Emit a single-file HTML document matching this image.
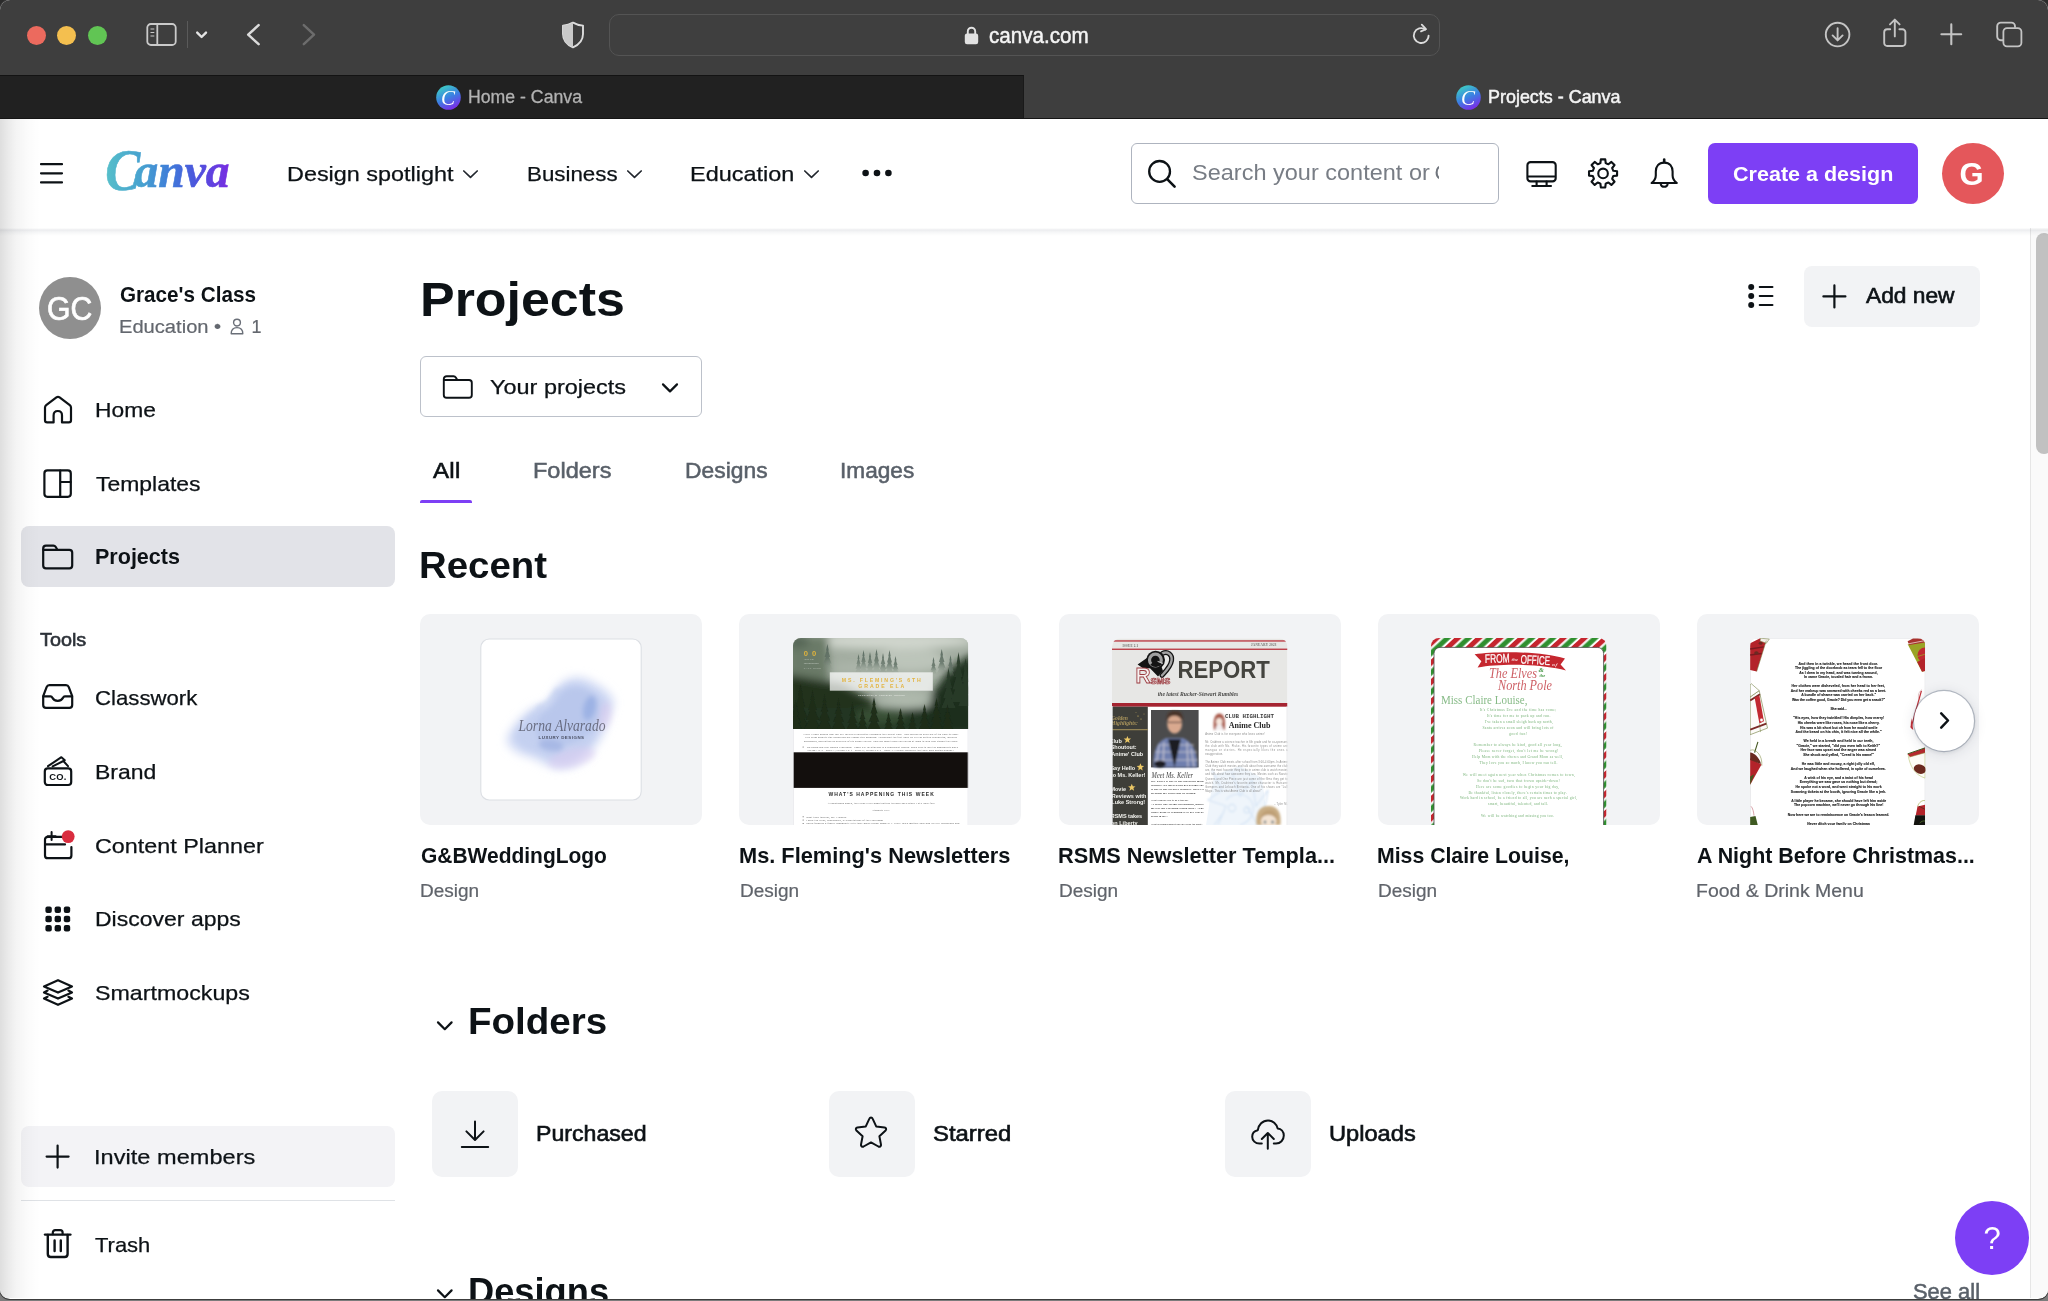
<!DOCTYPE html>
<html lang="en">
<head>
<meta charset="utf-8">
<title>Projects - Canva</title>
<style>
*{box-sizing:border-box;margin:0;padding:0}
html,body{width:2048px;height:1301px;overflow:hidden;background:linear-gradient(#2b2b2b 0,#2b2b2b 50%,#7c7c7c 50%,#7c7c7c 100%)}
body{font-family:"Liberation Sans",sans-serif;color:#0d1216;position:relative}
.abs{position:absolute}
.t{position:absolute;white-space:nowrap;line-height:1;z-index:7;transform-origin:0 50%}
svg{position:absolute;overflow:visible}
#win{will-change:transform;position:absolute;left:0;top:0;width:2048px;height:1299px;overflow:hidden;border-radius:10px 10px 10px 10px;background:#fff;box-shadow:0 0 0 1px #3c3c3c}
#toolbar{position:absolute;left:0;top:0;width:2048px;height:75px;background:#3e3e3e}
#tabbar{position:absolute;left:0;top:75px;width:2048px;height:44px;background:#3e3e3e;border-bottom:1px solid #151515}
#tab1{position:absolute;left:0;top:0;width:1024px;height:43px;background:#212121;border-top:1.5px solid #131313;border-right:1px solid #191919}
#urlbar{position:absolute;left:609px;top:14px;width:831px;height:42px;border-radius:10px;background:#3f3f3f;border:1px solid #545454}
.light{position:absolute;top:25.5px;width:19px;height:19px;border-radius:50%}
#page{position:absolute;left:0;top:119px;width:2048px;height:1179px;background:#fff}
#hdr{position:absolute;left:0;top:119px;width:2048px;height:109px;background:#fff;z-index:5}
#hdrsh{position:absolute;left:0;top:227.6px;width:2048px;height:8.4px;z-index:5;background:linear-gradient(180deg,rgba(50,60,85,0) 0,rgba(50,60,85,.095) 26%,rgba(50,60,85,.05) 48%,rgba(50,60,85,.018) 78%,rgba(50,60,85,0) 100%)}
#leftshade{position:absolute;left:0;top:119px;width:40px;height:1179px;background:linear-gradient(90deg,rgba(0,0,0,.13),rgba(0,0,0,.085) 18%,rgba(0,0,0,.045) 40%,rgba(0,0,0,.015) 70%,rgba(0,0,0,0));z-index:9;pointer-events:none}
#sbtrack{position:absolute;left:2030px;top:228px;width:18px;height:1070px;background:#fafafa;border-left:1px solid #e6e6e6;z-index:4}
#sbthumb{position:absolute;left:5px;top:5px;width:16px;height:221px;border-radius:8px;background:#c1c1c1}
.card{position:absolute;top:614px;width:282px;height:211px;border-radius:10px;background:#f2f3f5;overflow:hidden}
.thumb{position:absolute;overflow:hidden}
.tile{position:absolute;top:1091px;width:86px;height:86px;border-radius:10px;background:#f2f3f5}
.ic{fill:none;stroke:#0d1216;stroke-width:1.5;stroke-linecap:round;stroke-linejoin:round}
</style>
</head>
<body>
<div id="win">
<!-- ===== Safari chrome ===== -->
<div id="toolbar">
  <div class="light" style="left:26.5px;background:#ec6a5e"></div>
  <div class="light" style="left:57px;background:#f4bf4f"></div>
  <div class="light" style="left:87.5px;background:#61c554"></div>
  <!-- sidebar toggle -->
  <svg style="left:146px;top:22px" width="32" height="25" viewBox="0 0 32 25"><rect x="1.3" y="2" width="28.4" height="21" rx="3.6" fill="none" stroke="#cacaca" stroke-width="1.8"/><line x1="11.3" y1="2" x2="11.3" y2="23" stroke="#cacaca" stroke-width="1.8"/><g stroke="#cacaca" stroke-width="1.2"><line x1="4.5" y1="7" x2="8.3" y2="7"/><line x1="4.5" y1="10.5" x2="8.3" y2="10.5"/><line x1="4.5" y1="14" x2="8.3" y2="14"/></g></svg>
  <div class="abs" style="left:186.5px;top:21px;width:1px;height:27px;background:#5a5a5a"></div>
  <svg style="left:195px;top:29px" width="13" height="11" viewBox="0 0 13 11"><path d="M2.2 3.6 L6.6 8 L11 3.6" fill="none" stroke="#e4e4e4" stroke-width="2.4" stroke-linecap="round" stroke-linejoin="round"/></svg>
  <!-- back / forward -->
  <svg style="left:245px;top:22px" width="18" height="26" viewBox="0 0 18 26"><path d="M13.6 3.2 L3.2 12.7 L13.6 22.2" fill="none" stroke="#dadada" stroke-width="2.5" stroke-linecap="round" stroke-linejoin="round"/></svg>
  <svg style="left:300px;top:22px" width="18" height="26" viewBox="0 0 18 26"><path d="M3.8 3.2 L14 12.7 L3.8 22.2" fill="none" stroke="#6c6c6c" stroke-width="2.5" stroke-linecap="round" stroke-linejoin="round"/></svg>
  <!-- shield -->
  <svg style="left:561px;top:21px" width="24" height="28" viewBox="0 0 24 28"><path d="M12 1.6 C8.5 3.6 5 4.4 2 4.6 V13 C2 19.5 6.2 23.8 12 26.3 C17.8 23.8 22 19.5 22 13 V4.6 C19 4.4 15.5 3.6 12 1.6 Z" fill="none" stroke="#dcdcdc" stroke-width="1.9" stroke-linejoin="round"/><path d="M12 1.6 C8.5 3.6 5 4.4 2 4.6 V13 C2 19.5 6.2 23.8 12 26.3 Z" fill="#c9c9c9"/></svg>
  <div id="urlbar"></div>
  <!-- lock -->
  <svg style="left:964px;top:26px" width="15" height="19" viewBox="0 0 15 19"><rect x="0.8" y="7.6" width="13.4" height="10.6" rx="2.2" fill="#e2e2e2"/><path d="M3.8 8 V5.4 a3.7 3.7 0 0 1 7.4 0 V8" fill="none" stroke="#e2e2e2" stroke-width="1.9"/></svg>
  <!-- reload -->
  <svg style="left:1411px;top:23px" width="21" height="23" viewBox="0 0 21 23"><path d="M17.6 12.6 a7.4 7.4 0 1 1 -3.2 -6.1" fill="none" stroke="#dcdcdc" stroke-width="1.8" stroke-linecap="round"/><path d="M10.8 1.6 L15 6.2 L10 8.3" fill="none" stroke="#dcdcdc" stroke-width="1.8" stroke-linecap="round" stroke-linejoin="round"/></svg>
  <!-- downloads -->
  <svg style="left:1824px;top:21px" width="28" height="28" viewBox="0 0 28 28"><circle cx="13.6" cy="13.6" r="11.8" fill="none" stroke="#c4c4c4" stroke-width="1.9"/><path d="M13.6 7.2 V19 M8.6 14.4 L13.6 19.4 L18.6 14.4" fill="none" stroke="#c4c4c4" stroke-width="1.9" stroke-linecap="round" stroke-linejoin="round"/></svg>
  <!-- share -->
  <svg style="left:1882px;top:18px" width="26" height="30" viewBox="0 0 26 30"><path d="M8.2 11.2 H5.2 a3 3 0 0 0 -3 3 V25 a3 3 0 0 0 3 3 H20.4 a3 3 0 0 0 3 -3 V14.2 a3 3 0 0 0 -3 -3 H17.4" fill="none" stroke="#c4c4c4" stroke-width="1.9" stroke-linecap="round"/><path d="M12.8 18.4 V2 M8 6.4 L12.8 1.6 L17.6 6.4" fill="none" stroke="#c4c4c4" stroke-width="1.9" stroke-linecap="round" stroke-linejoin="round"/></svg>
  <!-- plus -->
  <svg style="left:1940px;top:23px" width="23" height="23" viewBox="0 0 23 23"><path d="M11.3 1.4 V21.2 M1.4 11.3 H21.2" fill="none" stroke="#c4c4c4" stroke-width="2.1" stroke-linecap="round"/></svg>
  <!-- tabs -->
  <svg style="left:1994px;top:20px" width="31" height="29" viewBox="0 0 31 29"><rect x="9.4" y="8.2" width="18" height="18.2" rx="3.6" fill="none" stroke="#c4c4c4" stroke-width="1.8"/><path d="M9 20.2 H6.8 a3.6 3.6 0 0 1 -3.6 -3.6 V6.2 a3.6 3.6 0 0 1 3.6 -3.6 H17.4 a3.6 3.6 0 0 1 3.6 3.6 V7.8" fill="none" stroke="#c4c4c4" stroke-width="1.9"/></svg>
</div>
<div id="tabbar"><div id="tab1"></div></div>
<!-- tab favicons -->
<svg style="left:436px;top:85px" width="25" height="25" viewBox="0 0 25 25"><defs><linearGradient id="fav" x1="0.25" y1="0.05" x2="0.7" y2="0.97"><stop offset="0" stop-color="#3ecbc6"/><stop offset=".5" stop-color="#3b7fe2"/><stop offset="1" stop-color="#7d2ae8"/></linearGradient></defs><circle cx="12.5" cy="12.5" r="12.3" fill="url(#fav)"/><text x="12.1" y="19.6" text-anchor="middle" font-family="Liberation Serif,serif" font-style="italic" font-size="21" fill="#fff">C</text></svg>
<svg style="left:1456px;top:85px" width="25" height="25" viewBox="0 0 25 25"><circle cx="12.5" cy="12.5" r="12.3" fill="url(#fav)"/><text x="12.1" y="19.6" text-anchor="middle" font-family="Liberation Serif,serif" font-style="italic" font-size="21" fill="#fff">C</text></svg>
<!-- ===== Canva page ===== -->
<div id="page"></div>
<div id="sbtrack"><div id="sbthumb"></div></div>
<div id="hdr"></div><div id="hdrsh"></div>
<div id="leftshade"></div>
<div class="abs" style="left:0;top:119px;width:2048px;height:110px;z-index:6">
  <!-- hamburger -->
  <svg style="left:40px;top:43px" width="23" height="23" viewBox="0 0 23 23"><path d="M1 2.2 H22 M1 11.3 H22 M1 20.4 H22" stroke="#0d1216" stroke-width="2.2" stroke-linecap="round"/></svg>
  <!-- Canva wordmark -->
  <svg style="left:100px;top:24px" width="140" height="60" viewBox="100 143 140 60"><defs><linearGradient id="cg" gradientUnits="userSpaceOnUse" x1="106" y1="0" x2="230" y2="0"><stop offset="0" stop-color="#56bfca"/><stop offset=".3" stop-color="#46a0d0"/><stop offset=".52" stop-color="#3f7bd9"/><stop offset=".74" stop-color="#4d52dd"/><stop offset="1" stop-color="#7a2be2"/></linearGradient></defs><g font-family="Liberation Serif,serif" font-style="italic" font-weight="bold" fill="url(#cg)" stroke="url(#cg)" stroke-width=".6"><text x="105.2" y="189.6" font-size="60" textLength="35" lengthAdjust="spacingAndGlyphs">C</text><text x="134.6" y="187.2" font-size="48" textLength="95" lengthAdjust="spacingAndGlyphs">anva</text></g></svg>
  <!-- nav chevrons -->
  <svg style="left:462px;top:50.4px" width="17" height="11" viewBox="0 0 17 11"><path d="M1.8 2 L8.5 8.4 L15.2 2" fill="none" stroke="#22272e" stroke-width="1.7" stroke-linecap="round" stroke-linejoin="round"/></svg>
  <svg style="left:626px;top:50.4px" width="17" height="11" viewBox="0 0 17 11"><path d="M1.8 2 L8.5 8.4 L15.2 2" fill="none" stroke="#22272e" stroke-width="1.7" stroke-linecap="round" stroke-linejoin="round"/></svg>
  <svg style="left:803px;top:50.4px" width="17" height="11" viewBox="0 0 17 11"><path d="M1.8 2 L8.5 8.4 L15.2 2" fill="none" stroke="#22272e" stroke-width="1.7" stroke-linecap="round" stroke-linejoin="round"/></svg>
  <!-- more dots -->
  <svg style="left:862px;top:50px" width="30" height="8" viewBox="0 0 30 8"><circle cx="3.6" cy="4" r="3.3" fill="#0d1216"/><circle cx="15" cy="4" r="3.3" fill="#0d1216"/><circle cx="26.4" cy="4" r="3.3" fill="#0d1216"/></svg>
  <!-- search box -->
  <div class="abs" style="left:1131px;top:24px;width:368px;height:61px;border:1.5px solid #aeb4bf;border-radius:6px;background:#fff;overflow:hidden">
    <svg style="left:15px;top:15px" width="30" height="30" viewBox="0 0 30 30"><circle cx="12.6" cy="12.4" r="10.4" fill="none" stroke="#0d1216" stroke-width="2.3"/><path d="M20.2 20.2 L27.6 27.6" stroke="#0d1216" stroke-width="2.6" stroke-linecap="round"/></svg>
    <div class="t" style="left:302.5px;top:18.6px;font-size:21.5px;color:#70757d;width:4px;overflow:hidden">Canva's</div>
  </div>
  <!-- monitor -->
  <svg style="left:1523px;top:38px" width="38" height="34" viewBox="1523 157 38 34"><rect x="1527.4" y="162.1" width="28.3" height="19.3" rx="3.2" fill="none" stroke="#0d1216" stroke-width="2.1"/><path d="M1527.6 176.6 H1555.6" stroke="#0d1216" stroke-width="2"/><path d="M1536.6 181.6 V185.6 M1546.6 181.6 V185.6 M1532.3 186 H1551" stroke="#0d1216" stroke-width="2.1" stroke-linecap="round"/></svg>
  <!-- gear -->
  <svg style="left:1583px;top:34px" width="40" height="40" viewBox="1583 153 40 40"><path d="M1600.40 163.14 L1600.83 159.37 L1605.27 159.37 L1605.70 163.14 L1607.05 163.75 L1608.43 164.27 L1611.40 161.91 L1614.54 165.05 L1612.18 168.02 L1612.70 169.40 L1613.31 170.75 L1617.08 171.18 L1617.08 175.62 L1613.31 176.05 L1612.70 177.40 L1612.18 178.78 L1614.54 181.75 L1611.40 184.89 L1608.43 182.53 L1607.05 183.05 L1605.70 183.66 L1605.27 187.43 L1600.83 187.43 L1600.40 183.66 L1599.05 183.05 L1597.67 182.53 L1594.70 184.89 L1591.56 181.75 L1593.92 178.78 L1593.40 177.40 L1592.79 176.05 L1589.02 175.62 L1589.02 171.18 L1592.79 170.75 L1593.40 169.40 L1593.92 168.02 L1591.56 165.05 L1594.70 161.91 L1597.67 164.27 L1599.05 163.75 Z" fill="none" stroke="#0d1216" stroke-width="2.1" stroke-linejoin="round"/><circle cx="1603.05" cy="173.4" r="4.8" fill="none" stroke="#0d1216" stroke-width="2.1"/></svg>
  <!-- bell -->
  <svg style="left:1646px;top:34px" width="38" height="40" viewBox="1646 153 38 40"><path d="M1664.2 162.6 C1658.6 162.6 1655.8 166.4 1655.8 171.6 V175.4 C1655.8 178.6 1654 181 1651.6 183 H1676.8 C1674.4 181 1672.6 178.6 1672.6 175.4 V171.6 C1672.6 166.4 1669.8 162.6 1664.2 162.6 Z" fill="none" stroke="#0d1216" stroke-width="2.1" stroke-linejoin="round"/><path d="M1664.2 162 V159.6" stroke="#0d1216" stroke-width="2.6" stroke-linecap="round"/><path d="M1660.6 184 a3.7 3.7 0 0 0 7.2 0" fill="none" stroke="#0d1216" stroke-width="2"/></svg>
  <!-- create button -->
  <div class="abs" style="left:1708px;top:24px;width:210px;height:61px;border-radius:7px;background:#7d3ff5"></div>
  <!-- avatar -->
  <div class="abs" style="left:1942px;top:24px;width:62px;height:61px;border-radius:50%;background:#e4575b"></div>
</div>
<!-- ===== sidebar ===== -->
<div class="abs" style="left:39px;top:277px;width:62px;height:62px;border-radius:50%;background:#8f8f8f"></div>
<!-- member icon -->
<svg style="left:230px;top:318px" width="14" height="17" viewBox="0 0 14 17"><circle cx="7" cy="4.6" r="3.4" fill="none" stroke="#6a6f78" stroke-width="1.4"/><path d="M1.2 15.8 C1.2 11.4 3.4 9.6 7 9.6 C10.6 9.6 12.8 11.4 12.8 15.8 Z" fill="none" stroke="#6a6f78" stroke-width="1.4" stroke-linejoin="round"/></svg>
<!-- active row -->
<div class="abs" style="left:21px;top:526px;width:374px;height:61px;border-radius:8px;background:#e2e3e8"></div>
<!-- invite row -->
<div class="abs" style="left:21px;top:1126px;width:374px;height:61px;border-radius:8px;background:#f3f3f6"></div>
<div class="abs" style="left:21px;top:1200px;width:374px;height:1.2px;background:#dfe2e6"></div>
<!-- home -->
<svg style="left:42px;top:394px" width="32" height="32" viewBox="0 0 32 32"><path d="M3 13.6 C3 12.6 3.4 11.8 4.2 11.2 L14.4 3.4 C15.4 2.7 16.6 2.7 17.6 3.4 L27.8 11.2 C28.6 11.8 29 12.6 29 13.6 V26.2 C29 27.5 28 28.4 26.8 28.4 H20 V21.4 C20 18.6 18.2 17 15.8 17 C13.4 17 11.6 18.6 11.6 21.4 V28.4 H5.2 C4 28.4 3 27.5 3 26.2 Z" class="ic" style="stroke-width:2.2"/></svg>
<!-- templates -->
<svg style="left:42px;top:468px" width="32" height="32" viewBox="0 0 32 32"><rect x="2.4" y="2.4" width="26.4" height="26.4" rx="3" class="ic" style="stroke-width:2.2"/><path d="M18.2 2.6 V28.6 M18.4 14 H28.6" class="ic" style="stroke-width:2.2"/></svg>
<!-- projects folder -->
<svg style="left:41px;top:543px" width="34" height="28" viewBox="0 0 34 28"><path d="M2.2 6 V22.6 C2.2 24.2 3.4 25.4 5 25.4 H28.4 C30 25.4 31.2 24.2 31.2 22.6 V9.6 C31.2 8 30 6.8 28.4 6.8 H16.4 L14.6 3.8 C14.1 3 13.3 2.6 12.4 2.6 H5 C3.4 2.6 2.2 3.8 2.2 5.4 Z" class="ic" style="stroke-width:2.2"/><path d="M2.4 6.8 H16" class="ic" style="stroke-width:2.2"/></svg>
<!-- classwork (inbox) -->
<svg style="left:41px;top:683px" width="34" height="27" viewBox="0 0 34 27"><path d="M2.2 13.2 L5.6 4.2 C6.1 2.9 7.1 2.2 8.4 2.2 H25 C26.3 2.2 27.3 2.9 27.8 4.2 L31.2 13.2 V22 C31.2 23.6 30 24.8 28.4 24.8 H5 C3.4 24.8 2.2 23.6 2.2 22 Z" class="ic" style="stroke-width:2.2"/><path d="M2.4 13.4 H9.6 C10.6 13.4 11 14 11.4 14.8 C12.2 16.6 14 17.8 16.7 17.8 C19.4 17.8 21.2 16.6 22 14.8 C22.4 14 22.8 13.4 23.8 13.4 H31" class="ic" style="stroke-width:2.2"/></svg>
<!-- brand -->
<svg style="left:43px;top:755px" width="30" height="32" viewBox="0 0 30 32"><rect x="1.8" y="13.4" width="26.4" height="16.6" rx="3" class="ic" style="stroke-width:2.2"/><path d="M5 11.2 L18.4 2.2 L21.8 5.2 M9.6 11.4 L20.4 6 L25 11.2" class="ic" style="stroke-width:2"/><text x="15" y="25.2" text-anchor="middle" font-family="Liberation Sans,sans-serif" font-weight="bold" font-size="9.4" fill="#0d1216" stroke="none" style="letter-spacing:.2px">CO.</text></svg>
<!-- content planner -->
<svg style="left:43px;top:829px" width="34" height="32" viewBox="0 0 34 32"><path d="M20.4 7.8 H4.8 C3.2 7.8 2 9 2 10.6 V26.4 C2 28 3.2 29.2 4.8 29.2 H25.6 C27.2 29.2 28.4 28 28.4 26.4 V18" class="ic" style="stroke-width:2.2"/><path d="M2.2 15.4 H22" class="ic" style="stroke-width:2.2"/><path d="M8.6 3 V11 M4.6 7.2 H12.6" class="ic" style="stroke-width:2"/><circle cx="25.2" cy="7.6" r="6.4" fill="#d92d3f"/></svg>
<!-- discover apps -->
<svg style="left:45px;top:906px" width="26" height="26" viewBox="0 0 26 26"><g fill="#0d1216"><rect x="0.4" y="0.6" width="6.4" height="6.4" rx="2"/><rect x="9.6" y="0.6" width="6.4" height="6.4" rx="2"/><rect x="18.8" y="0.6" width="6.4" height="6.4" rx="2"/><rect x="0.4" y="9.8" width="6.4" height="6.4" rx="2"/><rect x="9.6" y="9.8" width="6.4" height="6.4" rx="2"/><rect x="18.8" y="9.8" width="6.4" height="6.4" rx="2"/><rect x="0.4" y="19" width="6.4" height="6.4" rx="2"/><rect x="9.6" y="19" width="6.4" height="6.4" rx="2"/><rect x="18.8" y="19" width="6.4" height="6.4" rx="2"/></g></svg>
<!-- smartmockups layers -->
<svg style="left:41px;top:978px" width="34" height="30" viewBox="0 0 34 30"><path d="M17 2.2 L31 8.4 L17 14.6 L3 8.4 Z" class="ic" style="stroke-width:2.2"/><path d="M6.6 12.6 L3 14.4 L17 20.6 L31 14.4 L27.4 12.6" class="ic" style="stroke-width:2.2"/><path d="M6.6 18.8 L3 20.6 L17 26.8 L31 20.6 L27.4 18.8" class="ic" style="stroke-width:2.2"/></svg>
<!-- invite plus -->
<svg style="left:45px;top:1144px" width="26" height="26" viewBox="0 0 26 26"><path d="M12.6 1.6 V23.6 M1.6 12.6 H23.6" class="ic" style="stroke-width:2.2"/></svg>
<!-- trash -->
<svg style="left:43px;top:1228px" width="30" height="32" viewBox="0 0 30 32"><path d="M2 6.6 H27.4" class="ic" style="stroke-width:2.4"/><path d="M9.8 6.2 V4.6 C9.8 3.2 10.8 2.2 12.2 2.2 H17.2 C18.6 2.2 19.6 3.2 19.6 4.6 V6.2" class="ic" style="stroke-width:2.2"/><path d="M4.8 7 V26 C4.8 27.8 6 29 7.8 29 H21.6 C23.4 29 24.6 27.8 24.6 26 V7" class="ic" style="stroke-width:2.4"/><path d="M11.6 12.4 V23 M17.8 12.4 V23" class="ic" style="stroke-width:2.4"/></svg>
<!-- ===== main ===== -->
<!-- list view icon -->
<svg style="left:1747px;top:283px" width="28" height="26" viewBox="0 0 28 26"><g fill="#0d1216"><circle cx="4.2" cy="4" r="3"/><circle cx="4.2" cy="13" r="3"/><circle cx="4.2" cy="22" r="3"/></g><path d="M12.8 4 H25.4 M12.8 13 H25.4 M12.8 22 H25.4" stroke="#0d1216" stroke-width="2.2" stroke-linecap="round"/></svg>
<!-- add new -->
<div class="abs" style="left:1804px;top:265.5px;width:176px;height:61px;border-radius:8px;background:#f2f3f5"></div>
<svg style="left:1822px;top:284px" width="25" height="25" viewBox="0 0 25 25"><path d="M12.4 1.4 V23.4 M1.4 12.4 H23.4" class="ic" style="stroke-width:2.2"/></svg>
<!-- dropdown -->
<div class="abs" style="left:420px;top:356px;width:282px;height:61px;border:1.5px solid #bcc1ca;border-radius:6px;background:#fff"></div>
<svg style="left:442px;top:374px" width="32" height="26" viewBox="0 0 32 26"><path d="M1.8 5.4 V21 C1.8 22.6 3 23.8 4.6 23.8 H27 C28.6 23.8 29.8 22.6 29.8 21 V8.8 C29.8 7.2 28.6 6 27 6 H15.4 L13.8 3.4 C13.3 2.6 12.5 2.2 11.6 2.2 H4.6 C3 2.2 1.8 3.4 1.8 5 Z" class="ic" style="stroke-width:1.9"/><path d="M2 6 H15" class="ic" style="stroke-width:1.9"/></svg>
<svg style="left:661px;top:382px" width="18" height="12" viewBox="0 0 18 12"><path d="M2 2.4 L9 9.4 L16 2.4" class="ic" style="stroke-width:2.2"/></svg>
<!-- tab underline -->
<div class="abs" style="left:420px;top:500px;width:52px;height:3.2px;border-radius:2px 2px 0 0;background:#7d3ff5"></div>
<!-- folders chevrons -->
<svg style="left:436px;top:1020px" width="18" height="12" viewBox="0 0 18 12"><path d="M2 2.4 L8.8 9.2 L15.6 2.4" class="ic" style="stroke-width:2.2"/></svg>
<svg style="left:436px;top:1288px" width="18" height="12" viewBox="0 0 18 12"><path d="M2 2.4 L8.8 9.2 L15.6 2.4" class="ic" style="stroke-width:2.2"/></svg>
<!-- folder tiles -->
<div class="tile" style="left:432px"></div>
<div class="tile" style="left:828.5px"></div>
<div class="tile" style="left:1225px"></div>
<!-- purchased icon -->
<svg style="left:460px;top:1120px" width="30" height="29" viewBox="0 0 30 29"><path d="M15 1.6 V19.4 M6.4 11.4 L15 20 L23.6 11.4 M1.8 27 H28.2" class="ic" style="stroke-width:2"/></svg>
<!-- star icon -->
<svg style="left:853px;top:1115px" width="36" height="35" viewBox="0 0 36 35"><path d="M18 2.6 C18.7 2.6 19.3 3 19.6 3.7 L23.2 11.4 L31.6 12.4 C33.1 12.6 33.7 14.4 32.6 15.4 L26.4 21.2 L28 29.6 C28.3 31.1 26.8 32.2 25.4 31.5 L18 27.4 L10.6 31.5 C9.2 32.2 7.7 31.1 8 29.6 L9.6 21.2 L3.4 15.4 C2.3 14.4 2.9 12.6 4.4 12.4 L12.8 11.4 L16.4 3.7 C16.7 3 17.3 2.6 18 2.6 Z" class="ic" style="stroke-width:2"/></svg>
<!-- cloud upload icon -->
<svg style="left:1250px;top:1118px" width="36" height="33" viewBox="0 0 36 33"><path d="M11.8 25.6 H9.4 C5.4 25.6 2.2 22.6 2.2 18.8 C2.2 15.4 4.6 12.8 7.8 12.2 C8.4 6.8 12.6 2.4 18 2.4 C22.8 2.4 26.6 5.8 27.6 10.4 C31.2 10.8 33.8 13.8 33.8 17.6 C33.8 22 30.4 25.6 26 25.6 H23.8" class="ic" style="stroke-width:2"/><path d="M17.8 30.8 V15.4 M11.8 21 L17.8 15 L23.8 21" class="ic" style="stroke-width:2"/></svg>
<!-- help button -->
<div class="abs" style="left:1954.5px;top:1201px;width:74px;height:74px;border-radius:50%;background:#7d3ff5;z-index:3"></div>
<!-- ===== recent cards ===== -->
<div class="card" style="left:420px" id="c1"></div>
<div class="card" style="left:739.3px" id="c2"></div>
<div class="card" style="left:1058.6px" id="c3"></div>
<div class="card" style="left:1377.9px" id="c4"></div>
<div class="card" style="left:1697.2px" id="c5"></div>
<!-- next button -->
<div class="abs" style="left:1914px;top:690.5px;width:60px;height:60px;border-radius:50%;background:#fff;box-shadow:0 0 0 1.2px rgba(64,79,104,.3),0 1px 4px rgba(30,40,60,.12),0 2px 14px rgba(30,40,60,.13);z-index:3"></div>
<svg style="left:1938px;top:711px;z-index:4" width="13" height="19" viewBox="0 0 13 19"><path d="M3.2 2.4 L10 9.5 L3.2 16.6" class="ic" style="stroke-width:2.5"/></svg>
<!-- thumb 1: watercolor logo -->
<svg style="left:478px;top:636px" width="166" height="167" viewBox="478 636 166 167">
<defs>
<filter id="wb" x="-40%" y="-40%" width="180%" height="180%"><feGaussianBlur stdDeviation="5"/></filter>
<filter id="wb2" x="-40%" y="-40%" width="180%" height="180%"><feGaussianBlur stdDeviation="2.6"/></filter>
<filter id="wb4" x="-40%" y="-40%" width="180%" height="180%"><feGaussianBlur stdDeviation="3.2"/></filter>
<filter id="wb3" x="-40%" y="-40%" width="180%" height="180%"><feGaussianBlur stdDeviation="1.3"/></filter>
</defs>
<rect x="480.8" y="639" width="160.4" height="161" rx="8.5" fill="#fff" stroke="#dcdfe4" stroke-width="1.1"/>
<g filter="url(#wb)">
  <path d="M530.9 708.9 C536 706 543 705 547.5 702 C552 696 555 688 559.9 684 C565 679 571 677 577.9 677 C584 677 590 679.6 594.5 682.6 C599 685.4 604 687.6 607 690.9 C610.6 694.6 613.9 698 613.9 702 C613.9 708 610 713 608.3 718.5 C606.6 724 605.6 730 602.8 735.1 C600 741 596 747 591.7 751.7 C587 757 581.6 762.6 575.1 765.6 C569 768.4 562 769.4 555.8 768.4 C549 767.4 542.6 763 536.4 760 C529 756.6 521 755.6 515.7 751.7 C511 748.4 507 745 506.7 740.7 C506.4 735.6 510 731 512.9 726.8 C515.6 722.8 519 719 522.6 715.8 C525 713.6 527.6 710.8 530.9 708.9 Z" fill="#d3dcf5"/>
</g>
<g filter="url(#wb4)">
  <path d="M530.9 708.9 C536 706 543 705 547.5 702 C552 696 555 688 559.9 684 C565 679 571 677 577.9 677 C584 677 590 679.6 594.5 682.6 C599 685.4 604 687.6 607 690.9 C610.6 694.6 613.9 698 613.9 702 C613.9 708 610 713 608.3 718.5 C606.6 724 605.6 730 602.8 735.1 C600 741 596 747 591.7 751.7 C587 757 581.6 762.6 575.1 765.6 C569 768.4 562 769.4 555.8 768.4 C549 767.4 542.6 763 536.4 760 C529 756.6 521 755.6 515.7 751.7 C511 748.4 507 745 506.7 740.7 C506.4 735.6 510 731 512.9 726.8 C515.6 722.8 519 719 522.6 715.8 C525 713.6 527.6 710.8 530.9 708.9 Z" fill="#c1cdef" opacity=".8" transform="translate(560 720) scale(.86) translate(-560 -720)"/>
  <ellipse cx="572" cy="758" rx="24" ry="9" transform="rotate(-14 572 758)" fill="#dccff1" opacity=".6"/>
  <ellipse cx="604.5" cy="716" rx="6.5" ry="14" transform="rotate(10 604.5 716)" fill="#d9cbef" opacity=".6"/>
</g>
<g filter="url(#wb2)">
  <path d="M545 712 C552 707 556 702 560 695 C565 689 572 687 579 688 C588 690 596 694 598 702 C600 712 598 722 594 728 C588 736 578 742 566 745 C554 748 544 745 538 738 C533 731 536 718 545 712 Z" fill="#b3c2ea" opacity=".6"/>
  <ellipse cx="589.5" cy="708" rx="6.2" ry="12.5" transform="rotate(14 589.5 708)" fill="#93abe2" opacity=".75"/>
  <ellipse cx="551" cy="745.5" rx="12.5" ry="5.6" transform="rotate(8 551 745.5)" fill="#a2b4e4" opacity=".8"/>
  <path d="M536 708 L548 702 L558 688" fill="none" stroke="#9ab0e3" stroke-width="2.2" opacity=".55"/>
</g>
<text x="518.5" y="731" font-family="Liberation Serif,serif" font-style="italic" font-size="16.5" textLength="87" lengthAdjust="spacingAndGlyphs" fill="#3f3f4c" fill-opacity=".68">Lorna Alvarado</text>
<text x="538.6" y="739.4" font-family="Liberation Sans,sans-serif" font-weight="bold" font-size="4.4" textLength="45.4" lengthAdjust="spacing" fill="#4a4f63">LUXURY DESIGNS</text>
</svg>
<!-- thumb 2: forest newsletter -->
<svg style="left:792.5px;top:638px" width="175.5" height="187" viewBox="792.5 638 175.5 187">
<defs>
<clipPath id="cpf"><rect x="792.5" y="638" width="175.5" height="91"/></clipPath>
<linearGradient id="tfade" x1="0" y1="0" x2="0" y2="1"><stop offset="0" stop-color="#53645a"/><stop offset=".55" stop-color="#5d6e62" stop-opacity=".85"/><stop offset="1" stop-color="#8a978a" stop-opacity="0"/></linearGradient>
<clipPath id="cp2"><path d="M792.5 825 V646 a8 8 0 0 1 8 -8 H960 a8 8 0 0 1 8 8 V825 Z"/></clipPath>
<linearGradient id="fg" x1="0" y1="0" x2="0" y2="1"><stop offset="0" stop-color="#a9b3a9"/><stop offset=".28" stop-color="#6d7d6c"/><stop offset=".55" stop-color="#2f442f"/><stop offset=".8" stop-color="#1b2b1b"/><stop offset="1" stop-color="#131f14"/></linearGradient>
<filter id="mist" x="-30%" y="-30%" width="160%" height="160%"><feGaussianBlur stdDeviation="4"/></filter>
<filter id="tb" x="-10%" y="-10%" width="120%" height="120%"><feGaussianBlur stdDeviation=".55"/></filter>
</defs>
<g clip-path="url(#cp2)">
  <rect x="792.5" y="638" width="175.5" height="187" fill="#fff"/>
  <g clip-path="url(#cpf)"><rect x="792.5" y="638" width="175.5" height="91" fill="#a3ada1"/>
  <g filter="url(#mist)">
    <ellipse cx="890" cy="641" rx="84" ry="8" fill="#d0d6cd"/>
    <ellipse cx="910" cy="660" rx="34" ry="12" fill="#c3cac0" opacity=".8"/>
    <rect x="786" y="636" width="42" height="48" fill="#6a7a68"/>
    <ellipse cx="797" cy="641" rx="12" ry="7" fill="#546554"/>
    <path d="M786 674 L842 684 L872 700 L890 735 L786 735 Z" fill="#22331f"/>
    <rect x="786" y="708" width="190" height="28" fill="#243623"/>
    <path d="M974 652 L950 668 L930 696 L922 735 L974 735 Z" fill="#1e2d1c"/>
    <ellipse cx="905" cy="700" rx="27" ry="9" fill="#aab5a8" opacity=".9"/>
    <ellipse cx="880" cy="716" rx="26" ry="8" fill="#3b5337" opacity=".9"/>
  </g>
  <g filter="url(#tb)">
    <g fill="url(#tfade)" opacity=".9">
      <path d="M826.9 644.0 L828.3 650.5 L827.7 650.5 L829.6 657.0 L828.4 657.0 L831.0 663.5 L829.2 663.5 L832.4 670.0 L821.4 670.0 L824.6 663.5 L822.8 663.5 L825.4 657.0 L824.1 657.0 L826.1 650.5 L825.5 650.5 Z"/>
      <path d="M858.0 654.0 L859.0 659.0 L858.5 659.0 L860.0 664.0 L859.1 664.0 L861.0 669.0 L859.6 669.0 L862.0 674.0 L854.0 674.0 L856.4 669.0 L855.0 669.0 L856.9 664.0 L856.0 664.0 L857.5 659.0 L857.0 659.0 Z"/>
      <path d="M863.0 650.0 L864.1 656.0 L863.6 656.0 L865.2 662.0 L864.2 662.0 L866.4 668.0 L864.9 668.0 L867.5 674.0 L858.5 674.0 L861.1 668.0 L859.6 668.0 L861.8 662.0 L860.8 662.0 L862.4 656.0 L861.9 656.0 Z"/>
      <path d="M869.5 652.0 L870.6 657.5 L870.1 657.5 L871.8 663.0 L870.7 663.0 L872.9 668.5 L871.4 668.5 L874.0 674.0 L865.0 674.0 L867.6 668.5 L866.1 668.5 L868.3 663.0 L867.2 663.0 L868.9 657.5 L868.4 657.5 Z"/>
      <path d="M876.0 649.0 L877.2 655.2 L876.7 655.2 L878.5 661.5 L877.4 661.5 L879.8 667.8 L878.1 667.8 L881.0 674.0 L871.0 674.0 L873.9 667.8 L872.2 667.8 L874.6 661.5 L873.5 661.5 L875.3 655.2 L874.8 655.2 Z"/>
      <path d="M882.5 653.0 L883.6 658.5 L883.1 658.5 L884.8 664.0 L883.7 664.0 L885.9 669.5 L884.4 669.5 L887.0 675.0 L878.0 675.0 L880.6 669.5 L879.1 669.5 L881.3 664.0 L880.2 664.0 L881.9 658.5 L881.4 658.5 Z"/>
      <path d="M889.0 650.0 L890.2 656.2 L889.7 656.2 L891.5 662.5 L890.4 662.5 L892.8 668.8 L891.1 668.8 L894.0 675.0 L884.0 675.0 L886.9 668.8 L885.2 668.8 L887.6 662.5 L886.5 662.5 L888.3 656.2 L887.8 656.2 Z"/>
      <path d="M895.0 656.0 L896.0 660.5 L895.5 660.5 L897.0 665.0 L896.1 665.0 L898.0 669.5 L896.6 669.5 L899.0 674.0 L891.0 674.0 L893.4 669.5 L892.0 669.5 L893.9 665.0 L893.0 665.0 L894.5 660.5 L894.0 660.5 Z"/>
      <path d="M941.2 649.0 L942.6 655.5 L942.0 655.5 L944.0 662.0 L942.7 662.0 L945.3 668.5 L943.5 668.5 L946.7 675.0 L935.7 675.0 L938.9 668.5 L937.1 668.5 L939.7 662.0 L938.5 662.0 L940.4 655.5 L939.8 655.5 Z"/>
      <path d="M933.0 657.0 L934.0 661.5 L933.5 661.5 L935.0 666.0 L934.1 666.0 L936.0 670.5 L934.6 670.5 L937.0 675.0 L929.0 675.0 L931.4 670.5 L930.0 670.5 L931.9 666.0 L931.0 666.0 L932.5 661.5 L932.0 661.5 Z"/>
      <path d="M950.0 655.0 L951.1 660.5 L950.6 660.5 L952.2 666.0 L951.2 666.0 L953.4 671.5 L951.9 671.5 L954.5 677.0 L945.5 677.0 L948.1 671.5 L946.6 671.5 L948.8 666.0 L947.8 666.0 L949.4 660.5 L948.9 660.5 Z"/>
    </g>
    <g fill="#2a3b2b" opacity=".9">
      <path d="M958.0 652.0 L960.0 664.5 L959.1 664.5 L962.0 677.0 L960.2 677.0 L964.0 689.5 L961.3 689.5 L966.0 702.0 L950.0 702.0 L954.7 689.5 L952.0 689.5 L955.8 677.0 L954.0 677.0 L956.9 664.5 L956.0 664.5 Z"/>
      <path d="M965.0 658.0 L966.8 670.0 L966.0 670.0 L968.5 682.0 L966.9 682.0 L970.2 694.0 L967.9 694.0 L972.0 706.0 L958.0 706.0 L962.1 694.0 L959.8 694.0 L963.1 682.0 L961.5 682.0 L964.0 670.0 L963.2 670.0 Z"/>
      <path d="M948.0 668.0 L949.8 678.0 L949.0 678.0 L951.5 688.0 L949.9 688.0 L953.2 698.0 L950.9 698.0 L955.0 708.0 L941.0 708.0 L945.1 698.0 L942.8 698.0 L946.1 688.0 L944.5 688.0 L947.0 678.0 L946.2 678.0 Z"/>
    </g>
    <g fill="#1c2b1b" opacity=".92">
      <path d="M800.0 684.0 L802.5 695.5 L801.4 695.5 L805.0 707.0 L802.8 707.0 L807.5 718.5 L804.1 718.5 L810.0 730.0 L790.0 730.0 L795.9 718.5 L792.5 718.5 L797.2 707.0 L795.0 707.0 L798.6 695.5 L797.5 695.5 Z"/>
      <path d="M812.0 690.0 L814.2 700.0 L813.2 700.0 L816.5 710.0 L814.5 710.0 L818.8 720.0 L815.7 720.0 L821.0 730.0 L803.0 730.0 L808.3 720.0 L805.2 720.0 L809.5 710.0 L807.5 710.0 L810.8 700.0 L809.8 700.0 Z"/>
      <path d="M824.0 694.0 L826.0 703.0 L825.1 703.0 L828.0 712.0 L826.2 712.0 L830.0 721.0 L827.3 721.0 L832.0 730.0 L816.0 730.0 L820.7 721.0 L818.0 721.0 L821.8 712.0 L820.0 712.0 L822.9 703.0 L822.0 703.0 Z"/>
      <path d="M838.0 698.0 L839.9 706.0 L839.0 706.0 L841.8 714.0 L840.1 714.0 L843.6 722.0 L841.1 722.0 L845.5 730.0 L830.5 730.0 L834.9 722.0 L832.4 722.0 L835.9 714.0 L834.2 714.0 L837.0 706.0 L836.1 706.0 Z"/>
      <path d="M852.0 702.0 L853.6 709.0 L852.9 709.0 L855.2 716.0 L853.8 716.0 L856.9 723.0 L854.7 723.0 L858.5 730.0 L845.5 730.0 L849.3 723.0 L847.1 723.0 L850.2 716.0 L848.8 716.0 L851.1 709.0 L850.4 709.0 Z"/>
      <path d="M873.5 697.0 L875.2 705.2 L874.5 705.2 L877.0 713.5 L875.4 713.5 L878.8 721.8 L876.4 721.8 L880.5 730.0 L866.5 730.0 L870.6 721.8 L868.2 721.8 L871.6 713.5 L870.0 713.5 L872.5 705.2 L871.8 705.2 Z"/>
      <path d="M862.0 708.0 L863.4 713.5 L862.8 713.5 L864.8 719.0 L863.5 719.0 L866.1 724.5 L864.3 724.5 L867.5 730.0 L856.5 730.0 L859.7 724.5 L857.9 724.5 L860.5 719.0 L859.2 719.0 L861.2 713.5 L860.6 713.5 Z"/>
      <path d="M888.0 712.0 L889.2 716.5 L888.7 716.5 L890.5 721.0 L889.4 721.0 L891.8 725.5 L890.1 725.5 L893.0 730.0 L883.0 730.0 L885.9 725.5 L884.2 725.5 L886.6 721.0 L885.5 721.0 L887.3 716.5 L886.8 716.5 Z"/>
      <path d="M900.0 708.0 L901.4 713.5 L900.8 713.5 L902.8 719.0 L901.5 719.0 L904.1 724.5 L902.3 724.5 L905.5 730.0 L894.5 730.0 L897.7 724.5 L895.9 724.5 L898.5 719.0 L897.2 719.0 L899.2 713.5 L898.6 713.5 Z"/>
      <path d="M912.0 712.0 L913.2 716.5 L912.7 716.5 L914.5 721.0 L913.4 721.0 L915.8 725.5 L914.1 725.5 L917.0 730.0 L907.0 730.0 L909.9 725.5 L908.2 725.5 L910.6 721.0 L909.5 721.0 L911.3 716.5 L910.8 716.5 Z"/>
      <path d="M924.0 704.0 L925.6 710.5 L924.9 710.5 L927.2 717.0 L925.8 717.0 L928.9 723.5 L926.7 723.5 L930.5 730.0 L917.5 730.0 L921.3 723.5 L919.1 723.5 L922.2 717.0 L920.8 717.0 L923.1 710.5 L922.4 710.5 Z"/>
      <path d="M936.0 698.0 L937.9 706.0 L937.0 706.0 L939.8 714.0 L938.1 714.0 L941.6 722.0 L939.1 722.0 L943.5 730.0 L928.5 730.0 L932.9 722.0 L930.4 722.0 L933.9 714.0 L932.2 714.0 L935.0 706.0 L934.1 706.0 Z"/>
      <path d="M947.0 704.0 L948.6 710.5 L947.9 710.5 L950.2 717.0 L948.8 717.0 L951.9 723.5 L949.7 723.5 L953.5 730.0 L940.5 730.0 L944.3 723.5 L942.1 723.5 L945.2 717.0 L943.8 717.0 L946.1 710.5 L945.4 710.5 Z"/>
      <path d="M795.0 700.0 L796.8 707.5 L796.0 707.5 L798.5 715.0 L796.9 715.0 L800.2 722.5 L797.9 722.5 L802.0 730.0 L788.0 730.0 L792.1 722.5 L789.8 722.5 L793.1 715.0 L791.5 715.0 L794.0 707.5 L793.2 707.5 Z"/>
    </g>
  </g>
  <g filter="url(#mist)"><ellipse cx="905" cy="699" rx="20" ry="6" fill="#b4beb1" opacity=".55"/><ellipse cx="858" cy="668" rx="26" ry="5" fill="#b9c2b6" opacity=".45"/></g>
  </g>
  <!-- overlay labels -->
  <text x="803.2" y="655.6" font-family="Liberation Sans,sans-serif" font-weight="bold" font-size="7.6" textLength="12.6" fill="#e0b33c">00</text>
  <g font-family="Liberation Sans,sans-serif" font-size="2.4" fill="#c9d0c8" opacity=".8"><text x="803.2" y="660" textLength="10">ISSUE</text><text x="803.2" y="663.8" textLength="15">NEWSLETTER</text><text x="803.2" y="668.6" textLength="17">FALL 2022</text></g>
  <rect x="829.3" y="672.3" width="103" height="18.4" fill="#fff" opacity=".72"/>
  <g font-family="Liberation Sans,sans-serif" font-weight="bold" font-size="5.2" fill="#e3b440" text-anchor="middle"><text x="880.8" y="681.6" textLength="79" lengthAdjust="spacing">MS. FLEMING'S 6TH</text><text x="880.8" y="687.9" textLength="46" lengthAdjust="spacing">GRADE ELA</text></g>
  <text x="880.8" y="695.6" text-anchor="middle" font-family="Liberation Serif,serif" font-style="italic" font-size="2.9" textLength="47" fill="#eef0ec">Newsletter &amp; Learning Journal</text>
  <!-- intro text -->
  <g font-family="Liberation Serif,serif" font-style="italic" font-size="2.5" fill="#555" text-anchor="middle">
    <text x="880.5" y="734.8" textLength="155">Every Friday around 3pm you will receive a newsletter recapping the current week - and sharing an overview of the week to come.</text>
    <text x="880.5" y="738.3" textLength="152">This helps parents stay ahead and our kiddos stay prepared. Throughout the first week we will be getting acquainted, learning</text>
    <text x="880.5" y="741.8" textLength="154">procedures, and getting an overview of 6th grade English. Here are some things you can do at home to help your student this week:</text>
    <text x="882" y="747.8" textLength="151">Go ahead and join Google Classroom - codes will be attached in a subsequent remind. Make sure to join the appropriate block</text>
    <text x="880" y="751.2" textLength="146">Period 1 &amp; 2 - Block 1; Period 3 &amp; 4 - Block 2; Period 5 &amp; 6 - Block 3. Explore resources that have been posted already!</text>
  </g>
  <circle cx="802.6" cy="747" r=".5" fill="#444"/>
  <rect x="792.5" y="752.3" width="175.5" height="35.6" fill="#130f0d"/>
  <text x="880.6" y="796.4" text-anchor="middle" font-family="Liberation Sans,sans-serif" font-weight="bold" font-size="5" textLength="105.4" lengthAdjust="spacing" fill="#2a2a2a">WHAT'S HAPPENING THIS WEEK</text>
  <g font-family="Liberation Serif,serif" font-style="italic" font-size="2.6" fill="#555">
    <text x="880.6" y="803.8" text-anchor="middle" textLength="107">As mentioned above, this week is all about getting to know each other. Let's have fun!</text>
    <text x="880.6" y="810.8" text-anchor="middle" textLength="17">Students will:</text>
    <text x="805.8" y="817.6" textLength="40">Meet their teacher, Ms. Fleming</text>
    <text x="805.8" y="820.9" textLength="76.5">Learn the rules, procedures, &amp; expectations of the classroom</text>
    <text x="805.8" y="824.2" textLength="153">Begin forming a family community with their peers inside Room 211. Every voice matters here and we will encourage and</text>
  </g>
  <g fill="#444"><circle cx="802.6" cy="816.8" r=".5"/><circle cx="802.6" cy="820.1" r=".5"/><circle cx="802.6" cy="823.4" r=".5"/></g>
  <path d="M792.9 729 V825 M967.6 729 V825" stroke="#e4e5e8" stroke-width=".8"/>
</g>
</svg>
<!-- thumb 3: RSMS report -->
<svg style="left:1112px;top:638px" width="175.5" height="187" viewBox="1112 638 175.5 187">
<defs>
<clipPath id="cp3"><path d="M1112 825 V646.5 a8 8 0 0 1 8 -8 H1279.5 a8 8 0 0 1 8 8 V825 Z"/></clipPath>
<filter id="b3" x="-20%" y="-20%" width="140%" height="140%"><feGaussianBlur stdDeviation=".8"/></filter>
</defs>
<g clip-path="url(#cp3)">
  <rect x="1112" y="638" width="175.5" height="187" fill="#fff"/>
  <rect x="1112" y="638" width="175.5" height="65.5" fill="#e7e7e5"/>
  <rect x="1112" y="640.3" width="175.5" height="1.3" fill="#b8323c"/>
  <rect x="1112" y="648.6" width="175.5" height="1.3" fill="#b8323c"/>
  <g font-family="Liberation Serif,serif" font-weight="bold" font-size="3.2" fill="#6a6a68" lengthAdjust="spacingAndGlyphs"><text x="1122.6" y="646.5" textLength="15.4">ISSUE 2.1</text><text x="1251" y="646.4" textLength="25.4">JANUARY 2023</text></g>
  <!-- ram logo -->
  <g>
    <path d="M1162.5 653.4 C1167.5 650.8 1172.4 654.4 1171.6 660.4 C1170.8 666.4 1166.4 670.6 1162 675.4" fill="none" stroke="#141414" stroke-width="5" stroke-linecap="round"/>
    <path d="M1162.5 653.4 C1167.5 650.8 1172.4 654.4 1171.6 660.4 C1170.8 666.4 1166.4 670.6 1162 675.4" fill="none" stroke="#a2a2a2" stroke-width="2.4" stroke-linecap="round"/>
    <path d="M1147.6 657.6 L1137.6 664.6 L1143.4 668.6 L1150 668.2 L1158 676.6 L1163 671 L1160 662 Z" fill="#141414"/>
    <ellipse cx="1155.6" cy="660" rx="9.4" ry="9.2" fill="#141414"/>
    <circle cx="1155.4" cy="660" r="5.9" fill="none" stroke="#a0a0a0" stroke-width="3.2"/>
    <path d="M1151.6 663.4 A5.9 5.9 0 0 0 1160.4 663" fill="none" stroke="#141414" stroke-width="3.6"/>
    <path d="M1157.6 661.4 L1163 663.4" stroke="#c8c8c8" stroke-width="1"/>
    <text x="1135.6" y="683.2" font-family="Liberation Sans,sans-serif" font-weight="bold" font-size="21.4" fill="#f6f2f1" stroke="#9a3a3f" stroke-width=".9" textLength="15" lengthAdjust="spacingAndGlyphs">R</text>
    <text x="1150.6" y="683.6" font-family="Liberation Sans,sans-serif" font-weight="bold" font-size="8.4" fill="#f6f2f1" stroke="#9a3a3f" stroke-width=".7" textLength="19.6" lengthAdjust="spacingAndGlyphs">SMS</text>
  </g>
  <text x="1177.4" y="677.8" font-family="Liberation Sans,sans-serif" font-weight="bold" font-size="24.2" textLength="92.4" lengthAdjust="spacingAndGlyphs" fill="#44443f">REPORT</text>
  <text x="1198" y="695.7" text-anchor="middle" font-family="Liberation Serif,serif" font-style="italic" font-weight="bold" font-size="6.2" textLength="80.6" lengthAdjust="spacingAndGlyphs" fill="#4a4a48">the latest Rucker-Stewart Rumbles</text>
  <rect x="1112" y="703" width="175.5" height="3.7" fill="#a52431"/>
  <!-- left dark column -->
  <rect x="1112" y="706.7" width="35.8" height="119" fill="#3e3e39"/>
  <g font-family="Liberation Serif,serif" font-style="italic" font-weight="bold" font-size="5.6" fill="#a9945c"><text x="1111" y="719.6" textLength="17" lengthAdjust="spacingAndGlyphs">Golden</text><text x="1111" y="725.4" textLength="27" lengthAdjust="spacingAndGlyphs">Highlights:</text></g>
  <rect x="1112" y="729.2" width="35.8" height="1" fill="#a9945c"/>
  <g fill="#e7c768"><circle cx="1138" cy="716" r=".6"/><circle cx="1141" cy="719" r=".5"/><circle cx="1136" cy="712.6" r=".4"/><circle cx="1144" cy="714" r=".4"/></g>
  <g font-family="Liberation Sans,sans-serif" font-weight="bold" font-size="5.5" fill="#f4f4f0" text-anchor="end">
    <text x="1121.8" y="742.6">Club</text>
    <text x="1136.6" y="749.4">Shoutout:</text>
    <text x="1143.2" y="756.2">Anime' Club</text>
    <text x="1135.2" y="770">Say Hello</text>
    <text x="1145.4" y="776.9">to Ms. Keller!</text>
    <text x="1126" y="790.6">Movie</text>
    <text x="1146.4" y="797.6">Reviews with</text>
    <text x="1145.2" y="804.4">Luke Strong!</text>
    <text x="1142.2" y="818">RSMS takes</text>
    <text x="1137.6" y="825">on Liberty</text>
  </g>
  <g fill="#ecc866"><polygon points="1127.4,735.9 1128.4,738.4 1131.1,738.6 1129.0,740.3 1129.7,743.0 1127.4,741.5 1125.1,743.0 1125.8,740.3 1123.7,738.6 1126.4,738.4"/><polygon points="1140.4,763.3 1141.4,765.8 1144.1,766.0 1142.0,767.7 1142.7,770.4 1140.4,768.9 1138.1,770.4 1138.8,767.7 1136.7,766.0 1139.4,765.8"/><polygon points="1131.8,783.7 1132.8,786.2 1135.5,786.4 1133.4,788.1 1134.1,790.8 1131.8,789.3 1129.5,790.8 1130.2,788.1 1128.1,786.4 1130.8,786.2"/></g>
  <!-- photo -->
  <rect x="1151" y="710" width="47.6" height="57.4" fill="#4b4b4c"/>
  <g filter="url(#b3)">
    <path d="M1153.5 767.4 C1153 752 1156 742 1166 738 L1183 738 C1193 742 1197.5 752 1197.5 767.4 Z" fill="#6f7fae"/>
    <path d="M1156 767 L1159 746 M1163 767 L1164 742 M1188 767 L1187 742 M1194 767 L1191 748 M1155 752 H1197 M1154 760 H1198 M1158 745 H1194" stroke="#dcd6da" stroke-width="1.2" opacity=".75"/>
    <path d="M1168 739 L1174.5 767.4 L1181 739 Z" fill="#1e1e22"/>
    <ellipse cx="1174.6" cy="724" rx="7.4" ry="9.4" fill="#d9a98f"/>
    <path d="M1166.6 722 C1166 713 1170 711 1175 711 C1181 711 1183.6 714 1182.8 722 C1181 717 1177 715.6 1174 715.8 C1170 716 1168 718 1166.6 722 Z" fill="#4a342c"/>
    <path d="M1168 722.4 H1181.4" stroke="#2a2324" stroke-width="1"/>
    <ellipse cx="1160" cy="764" rx="6" ry="3.6" fill="#1d1d20"/>
  </g>
  <text x="1151.6" y="777.6" font-family="Liberation Serif,serif" font-style="italic" font-size="7.6" textLength="41.4" lengthAdjust="spacingAndGlyphs" fill="#454545">Meet Ms. Keller</text>
  <g font-family="Liberation Serif,serif" font-weight="bold" font-size="2.7" fill="#2f2f2f">
    <text x="1151" y="781.9" textLength="52.6">Ms. Keller is one of our 8th grade math</text>
    <text x="1151" y="785.8" textLength="52.6">teachers. We interviewed her because she</text>
    <text x="1151" y="789.7" textLength="52.6">is one of our favorite teachers. Here's a</text>
    <text x="1151" y="793.6" textLength="45">bit about Ms. Keller that we learned.</text>
    <text x="1151" y="801.3" textLength="37.4" font-style="italic" font-weight="normal">What inspires you to be a teacher</text>
    <text x="1151" y="805.2" textLength="52.6">"I really like seeing still moment, makes</text>
    <text x="1151" y="809.1" textLength="52.6">me feel like I'm doing a good deed." "The</text>
    <text x="1151" y="813" textLength="52.6">whole point of teaching is to get you be</text>
    <text x="1151" y="816.9" textLength="17">better in life."</text>
    <text x="1151" y="824.6" textLength="51.6" font-style="italic" font-weight="normal">What accomplishments do you value the most?</text>
  </g>
  <!-- faint anime sketch -->
  <g filter="url(#b3)" fill="none" stroke="#c9dcf1" stroke-width="1.1" opacity=".9">
    <path d="M1212 770 L1222 790 L1208 800 L1226 806 L1218 825 M1232 772 L1240 796 L1252 780 L1256 806 L1268 790 L1262 825 M1226 800 C1232 792 1246 792 1252 802 C1256 812 1250 822 1240 825 M1224 812 L1214 825 M1246 806 L1258 825"/>
    <circle cx="1232" cy="808" r="3.6"/><circle cx="1247" cy="810" r="3"/>
  </g>
  <path d="M1214 775 L1240 766 L1262 778 L1268 825 L1206 825 Z" fill="#dbe8f6" opacity=".45"/>
  <!-- anime girl bottom right -->
  <g filter="url(#b3)">
    <path d="M1256.6 825 C1255 812 1260 806 1268.6 806 C1277 806 1282 812 1280.4 825 Z" fill="#c9ad84"/>
    <ellipse cx="1268.6" cy="821" rx="7.6" ry="7" fill="#f3e3d3"/>
    <path d="M1259.6 820 C1261 812 1266 810 1269 810 C1274 810 1277.6 813 1277.8 820 C1274 815.6 1270 814.6 1267.6 815 C1264 815.6 1261.6 817 1259.6 820 Z" fill="#bfa077"/>
    <ellipse cx="1265" cy="822" rx="1.2" ry="1.5" fill="#4c6a78"/><ellipse cx="1272.6" cy="822" rx="1.2" ry="1.5" fill="#4c6a78"/>
  </g>
  <!-- club highlight -->
  <g filter="url(#b3)"><path d="M1214 730 C1212.6 720 1214.6 713.4 1219.4 713.4 C1224.2 713.4 1226 720 1224.6 730 Z" fill="#a8584a"/><ellipse cx="1219.2" cy="721.6" rx="3.2" ry="3.6" fill="#f6e6dc"/><path d="M1215 730 L1217 724.6 H1221.6 L1223.6 730 Z" fill="#f2eef0"/></g>
  <text x="1225" y="718.2" font-family="Liberation Mono,monospace" font-weight="bold" font-size="5.4" textLength="49" lengthAdjust="spacingAndGlyphs" fill="#3a3a3a">CLUB HIGHLIGHT</text>
  <text x="1228.8" y="728.2" font-family="Liberation Serif,serif" font-weight="bold" font-size="8.6" textLength="41.6" lengthAdjust="spacingAndGlyphs" fill="#262626">Anime Club</text>
  <g font-family="Liberation Sans,sans-serif" font-size="2.6" fill="#8a8a8a">
    <text x="1205.2" y="734.8" textLength="59.6">Anime Club is for everyone who loves anime!</text>
    <text x="1205.2" y="742.8" textLength="82.4">Mr. Crabtree a science teacher in 6th grade and he co-sponsors</text>
    <text x="1205.2" y="746.9" textLength="82.4">the club with Ms. Fluke. His favorite types of anime are</text>
    <text x="1205.2" y="751" textLength="82.4">mangas or stories. He especially likes the ones a</text>
    <text x="1205.2" y="755.1" textLength="18">exaggeration.</text>
    <text x="1205.2" y="763.1" textLength="82.4">The Anime Club meets after school from 3:00-4:00pm. In Anime</text>
    <text x="1205.2" y="767.2" textLength="82.4">Club they watch movies and talk about how awesome the club</text>
    <text x="1205.2" y="771.3" textLength="82.4">are, the most favorite thing to do in anime club is watch movies</text>
    <text x="1205.2" y="775.4" textLength="82.4">and talk about how awesome they are. Movies such as Naruto</text>
    <text x="1205.2" y="779.5" textLength="82.4">Queens and One Piece are just some of the films they get to</text>
    <text x="1205.2" y="783.6" textLength="82.4">watch. Mr. Crabtree's favorite anime character is Hatsune</text>
    <text x="1205.2" y="787.7" textLength="82.4">Gompers and Lelouch Brittania. One of his shows are "Lull</text>
    <text x="1205.2" y="791.8" textLength="56.6">Magic. This is what Anime Club is all about!"</text>
    <text x="1274.4" y="804.6" textLength="13">- Tyler M.</text>
  </g>
  <path d="M1112.4 706 V825 M1287.1 706 V825" stroke="#e0e1e4" stroke-width=".8"/>
</g>
</svg>
<!-- thumb 4: north pole letter -->
<svg style="left:1431px;top:638px" width="175.5" height="187" viewBox="1431 638 175.5 187">
<defs>
<clipPath id="cp4"><path d="M1431 825 V646 a8 8 0 0 1 8 -8 H1598.5 a8 8 0 0 1 8 8 V825 Z"/></clipPath>
<pattern id="candy" width="14.3" height="14.3" patternUnits="userSpaceOnUse" patternTransform="translate(1433.25 638) rotate(47.3)">
  <rect width="14.3" height="14.3" fill="#fff"/>
  <rect x="0" width="5" height="14.3" fill="#c5252e"/>
  <rect x="7.15" width="5" height="14.3" fill="#2f8f2f"/>
</pattern>
</defs>
<g clip-path="url(#cp4)">
  <rect x="1431" y="638" width="175.5" height="187" fill="url(#candy)"/>
  <path d="M1434 826 V653.4 a6 6 0 0 1 6 -6 H1597.6 a6 6 0 0 1 6 6 V826 Z" fill="#fff" stroke="#4a4a4a" stroke-width=".8"/>
  <!-- banner -->
  <path d="M1474.6 654.2 C1498 650.8 1540 651.4 1565 658.4 L1560.6 664.6 L1566 670.4 C1540 663.6 1500 663.4 1477.6 667.6 L1481.4 661.2 Z" fill="#c5272f"/>
  <g font-family="Liberation Sans,sans-serif" fill="#fff" stroke="#fff" stroke-width=".25">
    <text x="1485" y="662.7" font-size="12.4" textLength="24.6" lengthAdjust="spacingAndGlyphs" transform="rotate(-1.5 1497 660)">FROM</text>
    <text x="1511.4" y="661" font-size="4.2" font-style="italic" font-family="Liberation Serif,serif" textLength="6.6" lengthAdjust="spacingAndGlyphs" stroke="none">the</text>
    <text x="1520.6" y="664.2" font-size="12.4" textLength="29.4" lengthAdjust="spacingAndGlyphs" transform="rotate(3 1535 662)">OFFICE</text>
    <text x="1552.4" y="666" font-size="4.2" font-style="italic" font-family="Liberation Serif,serif" textLength="4.8" lengthAdjust="spacingAndGlyphs" transform="rotate(8 1554 664)" stroke="none">of</text>
  </g>
  <g font-family="Liberation Serif,serif" font-style="italic" fill="#c23a42" fill-opacity=".82">
    <text x="1489" y="678.4" font-size="14.6" textLength="48" lengthAdjust="spacingAndGlyphs">The Elves</text>
    <text x="1498" y="690" font-size="14.6" textLength="54" lengthAdjust="spacingAndGlyphs">North Pole</text>
  </g>
  <g font-family="Liberation Serif,serif" font-style="italic" font-weight="bold" fill="#4c9a4c"><text x="1538.6" y="672.4" font-size="7">&amp;</text><text x="1539.6" y="677.2" font-size="4.4" textLength="5.6" lengthAdjust="spacingAndGlyphs">the</text></g>
  <text x="1441" y="703.8" font-family="Liberation Serif,serif" font-size="12.4" textLength="86.4" lengthAdjust="spacingAndGlyphs" fill="#58a058" fill-opacity=".72">Miss Claire Louise,</text>
  <g font-family="Liberation Serif,serif" font-size="3.7" fill="#5ea45e" fill-opacity=".85" text-anchor="middle">
    <text x="1518" y="711.2" textLength="76.6">It's Christmas Eve and the time has come;</text>
    <text x="1518.6" y="717.1" textLength="63.4">It's time for me to pack up and run.</text>
    <text x="1518.8" y="723" textLength="68">I've taken a small sleigh back up north,</text>
    <text x="1518" y="728.9" textLength="71">Santa arrives soon and will bring lots of</text>
    <text x="1518" y="734.8" textLength="18">good fun!</text>
    <text x="1517.6" y="746.2" textLength="88">Remember to always be kind, good all year long,</text>
    <text x="1518.4" y="752.1" textLength="79.4">Please never forget, don't let me be wrong!</text>
    <text x="1517.6" y="758" textLength="91">Help Mom with the chores and Grand Mom as well,</text>
    <text x="1518.4" y="763.9" textLength="78">They love you so much, I know you can tell.</text>
    <text x="1518.8" y="775.8" textLength="112">We will meet again next year when Christmas comes to town,</text>
    <text x="1518.4" y="781.7" textLength="82.6">So don't be sad, turn that frown upside-down!</text>
    <text x="1517.6" y="787.6" textLength="83">Here are some goodies to begin your big day,</text>
    <text x="1517.6" y="793.5" textLength="98">Be thankful, listen closely, there's certain times to play.</text>
    <text x="1518.4" y="799.4" textLength="117">Work hard in school, be a friend to all, you are such a special girl,</text>
    <text x="1518" y="805.3" textLength="60">smart, beautiful, talented, and tall.</text>
    <text x="1517.6" y="817.2" textLength="73">We will be watching and missing you too.</text>
  </g>
</g>
</svg>
<!-- thumb 5: night before christmas -->
<svg style="left:1750px;top:638px" width="175.5" height="187" viewBox="1750 638 175.5 187">
<defs><clipPath id="cp5"><path d="M1750 825 V646 a8 8 0 0 1 8 -8 H1917.5 a8 8 0 0 1 8 8 V825 Z"/></clipPath></defs>
<g clip-path="url(#cp5)">
  <rect x="1750" y="638" width="175.5" height="187" fill="#fff"/>
  <path d="M1750.4 640 V825 M1925.1 640 V825" stroke="#e2e3e6" stroke-width=".8"/>
  <path d="M1752 638.4 H1923" stroke="#e6e7ea" stroke-width=".8"/>
  <!-- left illustrations -->
  <g>
    <polygon points="1750.2,643.3 1759.7,638.5 1766.3,640.6 1756.7,671.5 1750.2,670.0" fill="#b3232a"/>
    <polygon points="1760.6,638.2 1769.3,639.1 1766.3,643.3 1760.0,640.9" fill="#f4efe9" stroke="#6e7a3a" stroke-width=".5"/>
    <path d="M1750.2 649.0 L1763.7 646.9 M1750.2 655.0 L1761.8 653.5" stroke="#7a1a20" stroke-width="1.4"/>
    <ellipse cx="1760.6" cy="643.3" rx="1.9" ry="1.5" fill="#6b2a22"/><ellipse cx="1756.4" cy="652.9" rx="2.2" ry="1.6" fill="#6b2a22"/>
    <path d="M1756.7 671.5 L1766.3 640.6" stroke="#6e7a3a" stroke-width=".5"/>
    <polygon points="1750.2,696.9 1759.2,690.6 1767.5,728.1 1750.2,734.7" fill="#fcfbf8" stroke="#6e7a3a" stroke-width=".6"/>
    <polygon points="1751.3,683.7 1759.2,690.6 1750.2,696.9 1750.2,684.9" fill="#fff" stroke="#6e7a3a" stroke-width=".55"/>
    <path d="M1750.2 700.5 L1760.0 694.2" stroke="#7a2a26" stroke-width="1.9"/>
    <path d="M1750.2 729.6 L1766.3 723.6" stroke="#7a2a26" stroke-width="1.9"/>
    <polygon points="1754.6,697.5 1759.4,695.4 1763.9,721.2 1759.4,723.6" fill="#c12a31"/>
    <circle cx="1761.5" cy="720.0" r="1.7" fill="#fff" stroke="#c12a31" stroke-width=".4"/>
    <path d="M1759.4 723.6 L1760.6 732.1" stroke="#6e7a3a" stroke-width=".45"/>
    <path d="M1757.9 741.9 L1754.6 752.7" stroke="#43561f" stroke-width="1.1"/>
    <path d="M1750.2 750.3 C1755.5 747.9 1762.7 755.3 1761.8 765.8" fill="none" stroke="#7e8a3e" stroke-width=".55"/>
    <polygon points="1750.2,758.3 1761.5,764.6 1750.2,784.7" fill="#b3232a"/>
    <path d="M1750.2 752.4 C1754.3 752.4 1760.0 758.3 1760.9 764.0 L1750.2 760.1 Z" fill="#6a2a20"/>
    <polygon points="1750.2,776.6 1754.3,774.2 1750.2,784.7" fill="#41591f"/>
    <path d="M1751.0 806.3 C1752.8 807.8 1753.7 812.3 1754.0 815.6" fill="none" stroke="#d59aa0" stroke-width=".9"/>
    <polygon points="1750.2,817.1 1755.5,815.9 1757.9,825.5 1750.2,825.5" fill="#3f5a22"/>
  </g>
  <!-- right illustrations -->
  <g>
    <polygon points="1907.7,644.2 1925.0,640.9 1925.0,670.9 1922.0,671.8" fill="#9aa425"/>
    <polygon points="1907.6,641.2 1913.0,638.5 1923.5,638.5 1925.0,640.3 1925.0,642.4 1909.1,645.1" fill="#a8322e"/>
    <path d="M1907.9 643.9 L1925.0 640.6" stroke="#f0efe2" stroke-width=".7"/>
    <path d="M1925.0 647.5 A7.5 7.5 0 0 0 1925.0 662.5 Z" fill="#c12a31"/>
    <polygon points="1917.2,661.9 1925.0,658.0 1925.0,670.9 1922.0,671.8" fill="#b3232a"/>
    <path d="M1917.5 656.5 L1925.0 654.2" stroke="#9aa425" stroke-width=".8"/>
    <path d="M1922.0 689.7 C1917.5 692.4 1917.5 698.4 1920.5 699.9" fill="none" stroke="#c98a8e" stroke-width=".5"/>
    <path d="M1921.4 690.9 L1911.2 727.2" stroke="#c23038" stroke-width="1.2"/>
    <path d="M1911.2 717.9 L1910.6 727.8 L1913.3 729.9" fill="#c23038"/>
    <path d="M1908.2 755.6 C1910.0 765.8 1914.5 774.8 1925.0 778.1 L1925.0 752.4 Z" fill="#fdfcf6" stroke="#c3cb86" stroke-width=".7"/>
    <polygon points="1907.6,753.9 1925.0,747.9 1925.0,752.7 1910.0,757.1" fill="#b62a2e"/>
    <path d="M1907.6 753.9 L1925.0 747.9" stroke="#3f5a22" stroke-width="1"/>
    <path d="M1909.4 757.1 L1925.0 752.7" stroke="#8c9646" stroke-width=".5"/>
    <ellipse cx="1919.9" cy="769.1" rx="6.2" ry="4.6" transform="rotate(18 1919.9 769.1)" fill="#6b2a1f"/>
    <path d="M1917.5 806.6 C1919.0 801.8 1922.7 800.0 1925.0 800.6" fill="none" stroke="#aab35a" stroke-width=".7"/>
    <polygon points="1917.5,806.6 1925.0,804.8 1925.0,815.6 1915.7,815.6" fill="#b3232a"/>
    <polygon points="1915.4,815.3 1925.0,815.3 1925.0,825.5 1913.6,825.5" fill="#13130f"/>
    <path d="M1919.0 806.3 L1925.0 809.3" stroke="#6b2a1f" stroke-width="1"/>
    <path d="M1919.7 823.1 C1921.2 821.3 1923.5 820.7 1925.0 821.0" stroke="#4c6a28" stroke-width=".9" fill="none"/>
  </g>
  <g font-family="Liberation Sans,sans-serif" font-weight="bold" font-size="3.45" fill="#1f1f1f" stroke="#1f1f1f" stroke-width=".12" text-anchor="middle" lengthAdjust="spacingAndGlyphs">
    <text x="1838.3" y="664.5" textLength="79.5">And then in a twinkle, we heard the front door.</text>
    <text x="1838.6" y="668.9" textLength="87.2">The jiggling of the doorknob as tears fell to the floor</text>
    <text x="1838.4" y="673.5" textLength="78.4">As I drew in my head, and was turning around,</text>
    <text x="1838.5" y="678.1" textLength="69.0">In came Gracie, tousled hair and a frown.</text>
    <text x="1838.2" y="687.2" textLength="93.5">Her clothes were disheveled, from her head to her feet,</text>
    <text x="1838.5" y="691.7" textLength="95.3">And her makeup was smeared with cheeks red as a beet.</text>
    <text x="1838.6" y="696.3" textLength="74.9">A bundle of shame was carried on her back."</text>
    <text x="1838.6" y="701.2" textLength="93.3">Was the coffee good, Gracie? Did you even get a snack?"</text>
    <text x="1838.6" y="710.1" textLength="16.4">She said...</text>
    <text x="1838.7" y="719.2" textLength="91.0">"His eyes, how they twinkled! His dimples, how merry!</text>
    <text x="1838.6" y="723.8" textLength="81.9">His cheeks were like roses, his nose like a cherry.</text>
    <text x="1838.7" y="728.6" textLength="77.2">His was a bit short but oh how he would smile</text>
    <text x="1838.5" y="733.0" textLength="86.1">And the beard on his chin, it felt nice all the while."</text>
    <text x="1838.5" y="741.9" textLength="69.9">We held in a breath and held in our teeth,</text>
    <text x="1838.3" y="746.5" textLength="83.5">"Gracie," we started, "did you even talk to Keith?"</text>
    <text x="1838.2" y="751.3" textLength="75.6">Her face was upset and the anger was aimed</text>
    <text x="1838.5" y="755.8" textLength="70.7">She shook and yelled, "Creed is his name!"</text>
    <text x="1838.3" y="765.0" textLength="73.3">He was little and mousy, a right jolly old elf,</text>
    <text x="1838.3" y="769.6" textLength="94.9">And we laughed when she hollered, in spite of ourselves.</text>
    <text x="1838.6" y="778.7" textLength="68.7">A wink of his eye, and a twist of his head</text>
    <text x="1838.5" y="783.4" textLength="77.6">Everything we saw gave us nothing but dread;</text>
    <text x="1838.5" y="788.1" textLength="86.1">He spoke not a word, and went straight to his work</text>
    <text x="1838.5" y="792.7" textLength="95.3">Scanning tickets at the booth, ignoring Gracie like a jerk.</text>
    <text x="1838.7" y="801.9" textLength="95.0">A little player he became, she should have left him aside</text>
    <text x="1838.7" y="806.3" textLength="89.5">The popcorn machine, we'll never go through his line!</text>
    <text x="1838.5" y="815.6" textLength="101.5">Now here we are to reminiscence on Gracie's lesson learned.</text>
    <text x="1838.6" y="824.6" textLength="62.6">Never ditch your family on Christmas</text>
  </g>
</g>
</svg>
<!-- ===== fitted text ===== -->
<div class="t" style="left:989.0px;top:24.5px;font-size:22px;font-weight:400;color:#f4f4f4;transform:scaleX(0.9367);-webkit-text-stroke:.5px #f4f4f4">canva.com</div>
<div class="t" style="left:468.4px;top:88.6px;font-size:17.8px;font-weight:400;color:#b2b2b2;transform:scaleX(0.9943);-webkit-text-stroke:.3px #b2b2b2">Home - Canva</div>
<div class="t" style="left:1488.4px;top:88.6px;font-size:17.8px;font-weight:400;color:#f4f4f4;transform:scaleX(1.0081);-webkit-text-stroke:.5px #f4f4f4">Projects - Canva</div>
<div class="t" style="left:286.5px;top:163.2px;font-size:21px;font-weight:400;color:#0d1216;transform:scaleX(1.1145);-webkit-text-stroke:.25px #0d1216">Design spotlight</div>
<div class="t" style="left:527.1px;top:163.2px;font-size:21px;font-weight:400;color:#0d1216;transform:scaleX(1.0632);-webkit-text-stroke:.25px #0d1216">Business</div>
<div class="t" style="left:690.4px;top:163.2px;font-size:21px;font-weight:400;color:#0d1216;transform:scaleX(1.1175);-webkit-text-stroke:.25px #0d1216">Education</div>
<div class="t" style="left:1192.4px;top:163.2px;font-size:21.5px;font-weight:400;color:#787d85;transform:scaleX(1.0932)">Search your content or</div>
<div class="t" style="left:1732.5px;top:163.3px;font-size:21px;font-weight:700;color:#fff;transform:scaleX(1.0253)">Create a design</div>
<div class="t" style="left:1959.5px;top:158.5px;font-size:31px;font-weight:700;color:#fff;transform:scaleX(1.0000)">G</div>
<div class="t" style="left:47.0px;top:292.0px;font-size:33px;font-weight:400;color:#fff;transform:scaleX(0.9147);-webkit-text-stroke:.7px #fff">GC</div>
<div class="t" style="left:119.8px;top:283.8px;font-size:22px;font-weight:700;color:#0d1216;transform:scaleX(0.9396)">Grace's Class</div>
<div class="t" style="left:119.2px;top:317.7px;font-size:18px;font-weight:400;color:#63676e;transform:scaleX(1.1181);-webkit-text-stroke:.2px #63676e">Education •</div>
<div class="t" style="left:251.4px;top:317.7px;font-size:18px;font-weight:400;color:#63676e;transform:scaleX(1.0000);-webkit-text-stroke:.2px #63676e">1</div>
<div class="t" style="left:94.9px;top:399.2px;font-size:21px;font-weight:400;color:#0d1216;transform:scaleX(1.0858);-webkit-text-stroke:.25px #0d1216">Home</div>
<div class="t" style="left:96.0px;top:472.8px;font-size:21px;font-weight:400;color:#0d1216;transform:scaleX(1.0923);-webkit-text-stroke:.25px #0d1216">Templates</div>
<div class="t" style="left:95.0px;top:546.9px;font-size:21.5px;font-weight:700;color:#0d1216;transform:scaleX(1.0013)">Projects</div>
<div class="t" style="left:39.8px;top:630.6px;font-size:18px;font-weight:400;color:#2c3138;transform:scaleX(1.0995);-webkit-text-stroke:.6px #2c3138">Tools</div>
<div class="t" style="left:94.7px;top:687.4px;font-size:21px;font-weight:400;color:#0d1216;transform:scaleX(1.0566);-webkit-text-stroke:.25px #0d1216">Classwork</div>
<div class="t" style="left:94.7px;top:761.0px;font-size:21px;font-weight:400;color:#0d1216;transform:scaleX(1.0946);-webkit-text-stroke:.25px #0d1216">Brand</div>
<div class="t" style="left:94.7px;top:834.6px;font-size:21px;font-weight:400;color:#0d1216;transform:scaleX(1.1116);-webkit-text-stroke:.25px #0d1216">Content Planner</div>
<div class="t" style="left:94.7px;top:908.2px;font-size:21px;font-weight:400;color:#0d1216;transform:scaleX(1.0961);-webkit-text-stroke:.25px #0d1216">Discover apps</div>
<div class="t" style="left:95.2px;top:981.8px;font-size:21px;font-weight:400;color:#0d1216;transform:scaleX(1.1058);-webkit-text-stroke:.25px #0d1216">Smartmockups</div>
<div class="t" style="left:94.3px;top:1146.1px;font-size:21px;font-weight:400;color:#0d1216;transform:scaleX(1.1200);letter-spacing:0.04px;-webkit-text-stroke:.25px #0d1216">Invite members</div>
<div class="t" style="left:94.7px;top:1233.5px;font-size:21px;font-weight:400;color:#0d1216;transform:scaleX(1.0456);-webkit-text-stroke:.25px #0d1216">Trash</div>
<div class="t" style="left:419.8px;top:274.5px;font-size:49px;font-weight:700;color:#0d1216;transform:scaleX(1.0597)">Projects</div>
<div class="t" style="left:489.5px;top:376.3px;font-size:21px;font-weight:400;color:#0d1216;transform:scaleX(1.1171);-webkit-text-stroke:.25px #0d1216">Your projects</div>
<div class="t" style="left:432.5px;top:460.7px;font-size:21.5px;font-weight:400;color:#0d1216;transform:scaleX(1.1200);letter-spacing:0.27px;-webkit-text-stroke:.55px #0d1216">All</div>
<div class="t" style="left:532.9px;top:460.7px;font-size:21.5px;font-weight:400;color:#596069;transform:scaleX(1.0938);-webkit-text-stroke:.5px #596069">Folders</div>
<div class="t" style="left:684.6px;top:460.7px;font-size:21.5px;font-weight:400;color:#596069;transform:scaleX(1.0629);-webkit-text-stroke:.5px #596069">Designs</div>
<div class="t" style="left:839.8px;top:460.7px;font-size:21.5px;font-weight:400;color:#596069;transform:scaleX(1.0530);-webkit-text-stroke:.5px #596069">Images</div>
<div class="t" style="left:418.9px;top:548.3px;font-size:36px;font-weight:700;color:#0d1216;transform:scaleX(1.0673)">Recent</div>
<div class="t" style="left:1866.0px;top:286.3px;font-size:21.5px;font-weight:400;color:#0d1216;transform:scaleX(1.0577);-webkit-text-stroke:.6px #0d1216">Add new</div>
<div class="t" style="left:420.8px;top:845.1px;font-size:22px;font-weight:700;color:#0d1216;transform:scaleX(0.9529)">G&amp;BWeddingLogo</div>
<div class="t" style="left:738.8px;top:845.1px;font-size:22px;font-weight:700;color:#0d1216;transform:scaleX(0.9899)">Ms. Fleming's Newsletters</div>
<div class="t" style="left:1058.4px;top:845.1px;font-size:22px;font-weight:700;color:#0d1216;transform:scaleX(0.9868)">RSMS Newsletter Templa...</div>
<div class="t" style="left:1377.4px;top:845.1px;font-size:22px;font-weight:700;color:#0d1216;transform:scaleX(0.9656)">Miss Claire Louise,</div>
<div class="t" style="left:1697.0px;top:845.1px;font-size:22px;font-weight:700;color:#0d1216;transform:scaleX(0.9739)">A Night Before Christmas...</div>
<div class="t" style="left:420.2px;top:883.0px;font-size:17.5px;font-weight:400;color:#60646b;transform:scaleX(1.0845);-webkit-text-stroke:.2px #60646b">Design</div>
<div class="t" style="left:739.5px;top:883.0px;font-size:17.5px;font-weight:400;color:#60646b;transform:scaleX(1.0845);-webkit-text-stroke:.2px #60646b">Design</div>
<div class="t" style="left:1058.8px;top:883.0px;font-size:17.5px;font-weight:400;color:#60646b;transform:scaleX(1.0845);-webkit-text-stroke:.2px #60646b">Design</div>
<div class="t" style="left:1378.1px;top:883.0px;font-size:17.5px;font-weight:400;color:#60646b;transform:scaleX(1.0845);-webkit-text-stroke:.2px #60646b">Design</div>
<div class="t" style="left:1696.3px;top:883.0px;font-size:17.5px;font-weight:400;color:#60646b;transform:scaleX(1.1126);-webkit-text-stroke:.2px #60646b">Food &amp; Drink Menu</div>
<div class="t" style="left:467.9px;top:1004.3px;font-size:36px;font-weight:700;color:#0d1216;transform:scaleX(1.0708)">Folders</div>
<div class="t" style="left:536.3px;top:1123.7px;font-size:21.5px;font-weight:400;color:#0d1216;transform:scaleX(1.0751);-webkit-text-stroke:.6px #0d1216">Purchased</div>
<div class="t" style="left:933.2px;top:1123.7px;font-size:21.5px;font-weight:400;color:#0d1216;transform:scaleX(1.1100);-webkit-text-stroke:.6px #0d1216">Starred</div>
<div class="t" style="left:1328.9px;top:1123.7px;font-size:21.5px;font-weight:400;color:#0d1216;transform:scaleX(1.0994);-webkit-text-stroke:.6px #0d1216">Uploads</div>
<div class="t" style="left:468.0px;top:1273.6px;font-size:36px;font-weight:700;color:#0d1216;transform:scaleX(1.0071)">Designs</div>
<div class="t" style="left:1912.5px;top:1282.3px;font-size:21.5px;font-weight:400;color:#596069;transform:scaleX(1.0191);-webkit-text-stroke:.5px #596069">See all</div>
<div class="t" style="left:1983.5px;top:1223.3px;font-size:31px;font-weight:400;color:#fff;transform:scaleX(1.0000)">?</div>
</div>
</body>
</html>
